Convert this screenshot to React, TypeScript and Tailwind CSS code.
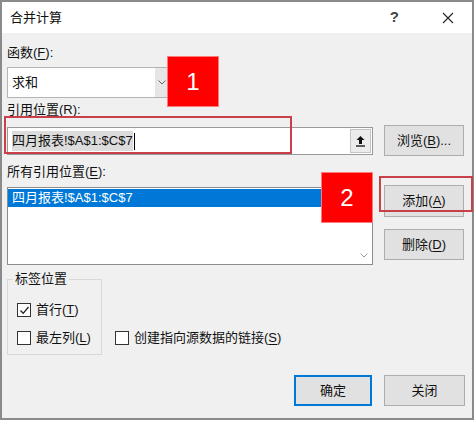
const font = "font-['Liberation_Sans','Noto_Sans_CJK_SC',sans-serif]";

function U({ children }: { children: string }) {
  return <span className="underline underline-offset-2">{children}</span>;
}

function Btn({ children, primary }: { children: React.ReactNode; primary?: boolean }) {
  return (
    <div
      className={
        "flex h-full items-center justify-center bg-[#e1e1e1] text-[13px] text-[#111] " +
        (primary ? "border-2 border-[#0078d7]" : "border border-[#adadad]")
      }
    >
      {children}
    </div>
  );
}

function Check({ checked, label }: { checked?: boolean; label: React.ReactNode }) {
  return (
    <div className="flex h-[16px] items-center gap-[5px] text-[13px] text-[#111]">
      <div className="flex h-[14px] w-[14px] items-center justify-center border border-[#333] bg-white">
        {checked && (
          <svg width="11" height="11" viewBox="0 0 11 11">
            <path d="M1.5 5.5 L4.2 8.3 L9.5 2" fill="none" stroke="#222" strokeWidth="1.3" />
          </svg>
        )}
      </div>
      <span>{label}</span>
    </div>
  );
}

export default function App() {
  return (
    <div className={"relative h-[422px] w-[475px] bg-white " + font}>
      <div className="flex h-[420px] w-[474px] flex-col border-2 border-[#8a8a8a]">
        {/* title bar */}
        <div className="flex h-[31px] items-center bg-white pl-[8px] text-[13px] text-[#111]">
          <span>合并计算</span>
          <span className="ml-auto mr-[43px] text-[15px] font-semibold text-[#444]">?</span>
          <svg width="12" height="12" viewBox="0 0 12 12" className="mr-[18px]">
            <path d="M1 1 L11 11 M11 1 L1 11" stroke="#222" strokeWidth="1.1" />
          </svg>
        </div>

        {/* body */}
        <div className="flex flex-1 flex-col bg-[#f0f0f0] pl-[5px] pr-[7px] text-[13px] text-[#111]">
          <div className="mt-[12px] h-[16px] leading-[16px]">
            函数(<U>F</U>):
          </div>
          <div className="mt-[6px] flex h-[31px] w-[163px] border border-[#b4b4b4] bg-white">
            <div className="flex flex-1 items-center pl-[4px]">求和</div>
            <div className="flex w-[14px] items-center justify-center bg-[#e6e6e6]">
              <svg width="8" height="5" viewBox="0 0 8 5">
                <path d="M0.5 0.5 L4 4 L7.5 0.5" fill="none" stroke="#666" strokeWidth="1" />
              </svg>
            </div>
          </div>
          <div className="mt-[4px] h-[16px] leading-[16px]">
            引用位置(<U>R</U>):
          </div>

          <div className="mt-[7px] flex">
            <div className="mt-[2px] flex h-[28px] w-[366px] border border-[#9a9a9a] bg-white">
              <div className="flex flex-1 items-center pl-[4px]">
                <span className="bg-[#dcdcdc] leading-[20px]">四月报表!$A$1:$C$7</span>
                <span className="ml-[1px] h-[17px] w-px bg-black" />
              </div>
              <div className="m-[1px] flex w-[21px] items-center justify-center border border-[#c4c4c4] bg-[#ececec]">
                <svg width="11" height="12" viewBox="0 0 11 12">
                  <path d="M5.5 1 L1.5 5 H4 V9 H7 V5 H9.5 Z" fill="#111" />
                  <path d="M1 11 H10" stroke="#111" strokeWidth="1.3" />
                </svg>
              </div>
            </div>
            <div className="ml-[11px] h-[31px] w-[80px]">
              <Btn>
                浏览(<U>B</U>)...
              </Btn>
            </div>
          </div>

          <div className="mt-[8px] h-[16px] leading-[16px]">
            所有引用位置(<U>E</U>):
          </div>

          <div className="mt-[5px] flex">
            <div className="mt-[2px] flex h-[78px] w-[366px] border border-[#8c8c8c] bg-white">
              <div className="flex-1">
                <div className="mt-[1px] flex h-[18px] items-center bg-[#0078d7] pl-[4px] text-white">
                  四月报表!$A$1:$C$7
                </div>
              </div>
              <div className="flex w-[16px] items-end justify-center pb-[6px]">
                <svg width="8" height="5" viewBox="0 0 8 5">
                  <path d="M0.5 0.5 L4 4 L7.5 0.5" fill="none" stroke="#9a9a9a" strokeWidth="1" />
                </svg>
              </div>
            </div>
            <div className="ml-[11px] flex w-[80px] flex-col">
              <div className="h-[32px]">
                <Btn>
                  添加(<U>A</U>)
                </Btn>
              </div>
              <div className="mt-[12px] h-[31px]">
                <Btn>
                  删除(<U>D</U>)
                </Btn>
              </div>
            </div>
          </div>

          <div className="mt-[6px] flex items-end">
            <fieldset className="h-[84px] w-[95px] min-w-0 border border-[#d8d8d8] pl-[9px]">
              <legend className="-ml-[4px] px-[2px] leading-[16px]">标签位置</legend>
              <div className="mt-[15px]">
                <Check checked label={<>首行(<U>T</U>)</>} />
              </div>
              <div className="mt-[12px]">
                <Check label={<>最左列(<U>L</U>)</>} />
              </div>
            </fieldset>
            <div className="mb-[9px] ml-[13px]">
              <Check label={<>创建指向源数据的链接(<U>S</U>)</>} />
            </div>
          </div>

          <div className="mt-[20px] flex justify-end">
            <div className="h-[31px] w-[78px]">
              <Btn primary>确定</Btn>
            </div>
            <div className="ml-[12px] h-[31px] w-[81px]">
              <Btn>关闭</Btn>
            </div>
          </div>
        </div>
      </div>

      {/* annotations */}
      <div className="absolute left-[4px] top-[116px] h-[38px] w-[288px] border-2 border-[#c9404a]" />
      <div className="absolute left-[379px] top-[176px] h-[36px] w-[94px] border-2 border-[#c9404a]" />
      <div className="absolute left-[167px] top-[56px] flex h-[51px] w-[52px] items-center justify-center border border-[#ff7a7a] bg-[#ff0000] text-[24px] text-white">
        1
      </div>
      <div className="absolute left-[321px] top-[172px] flex h-[51px] w-[52px] items-center justify-center border border-[#ff7a7a] bg-[#ff0000] text-[24px] text-white">
        2
      </div>
    </div>
  );
}
